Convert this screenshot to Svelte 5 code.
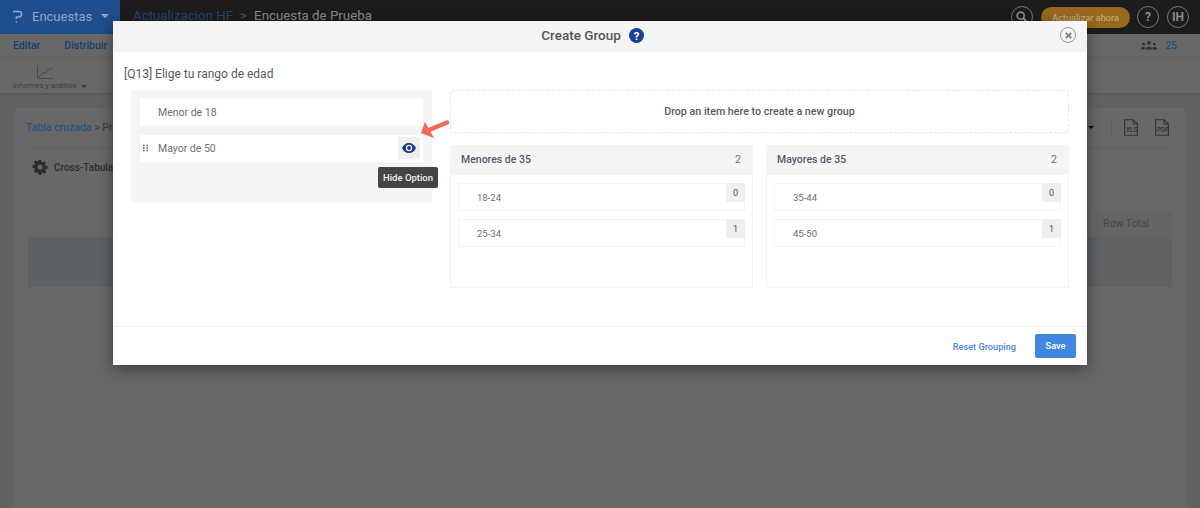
<script>
	const leftItems = [
		{ label: 'Menor de 18', active: false },
		{ label: 'Mayor de 50', active: true }
	];
	const groups = [
		{ name: 'Menores de 35', items: [{ label: '18-24', n: 0 }, { label: '25-34', n: 1 }] },
		{ name: 'Mayores de 35', items: [{ label: '35-44', n: 0 }, { label: '45-50', n: 1 }] }
	];
</script>

<div class="page">
	<header class="topbar">
		<div class="brand">
			<svg class="logo" viewBox="0 0 12 16" width="10" height="15">
				<path d="M0 2 H7 A3.200 3.200 0 0 1 7 8.500 H4 V11" fill="none" stroke="#8ea6c6" stroke-width="1.800"/>
				<circle cx="4" cy="14.500" r="1" fill="#8ea6c6"/>
			</svg>
			<span class="brand-name">Encuestas</span>
			<span class="caret"></span>
		</div>
		<div class="crumbs">
			<span class="crumb-link">Actualizacion HF</span>
			<span class="crumb-sep">&gt;</span>
			<span class="crumb-now">Encuesta de Prueba</span>
		</div>
		<div class="top-actions">
			<span class="round">
				<svg viewBox="0 0 16 16" width="14" height="14">
					<circle cx="6.500" cy="6.500" r="4" fill="none" stroke="#8c8c8c" stroke-width="2"/>
					<path d="M9.500 9.500 L14 14" stroke="#8c8c8c" stroke-width="2.400"/>
				</svg>
			</span>
			<span class="upgrade">Actualizar ahora</span>
			<span class="round">?</span>
			<span class="round">IH</span>
		</div>
	</header>

	<nav class="tabs">
		<span class="tab">Editar</span>
		<span class="tab">Distribuir</span>
		<span class="tabs-right">
			<svg viewBox="0 0 18 10" width="16" height="10">
				<g fill="#2e2e2e">
					<circle cx="9" cy="2.400" r="2"/><path d="M5.500 10 C5.500 6 12.500 6 12.500 10 Z"/>
					<circle cx="3" cy="4" r="1.500"/><path d="M0 10 C0 6.600 4 6.600 5 8 L4.600 10 Z"/>
					<circle cx="15" cy="4" r="1.500"/><path d="M18 10 C18 6.600 14 6.600 13 8 L13.400 10 Z"/>
				</g>
			</svg>
			<span class="seats">25</span>
		</span>
	</nav>

	<div class="toolbar">
		<div class="tool">
			<svg class="tool-icon" viewBox="0 0 16 14" width="16" height="14">
				<path d="M0.500 0.500 V13.500 H16" fill="none" stroke="#454545" stroke-width="0.800"/>
				<path d="M2 12 L6 7 L8 9 L11 4 L12.500 5.500 L15 2" fill="none" stroke="#454545" stroke-width="0.800"/>
			</svg>
			<span class="tool-label">Informes y análisis <span class="caret tool-caret"></span></span>
		</div>
	</div>

	<main class="content">
		<section class="card">
			<div class="card-head">
				<span class="bc"><span class="bc-link">Tabla cruzada</span> &gt; Pr</span>
				<span class="exports">
					<span class="caret dark-caret"></span>
					<span class="vsep"></span>
					<svg viewBox="0 0 22 24" width="16" height="17">
						<path d="M2 1 H14 L20 7 V23 H2 Z M14 1 V7 H20" fill="none" stroke="#333" stroke-width="1.600"/>
						<text x="4" y="18" class="file-text">XLS</text>
					</svg>
					<svg viewBox="0 0 22 24" width="16" height="17">
						<path d="M2 1 H14 L20 7 V23 H2 Z M14 1 V7 H20" fill="none" stroke="#333" stroke-width="1.600"/>
						<text x="4" y="18" class="file-text">PDF</text>
					</svg>
				</span>
			</div>
			<div class="settings">
				<svg viewBox="-1 -1 18 18" width="16" height="16">
					<path fill="#2d2d2d" fill-rule="evenodd" d="M6.500 0h3l.4 2.100 1.300.6L13 1.500l2 2-1.200 1.800.6 1.300 2.100.4v3l-2.100.4-.6 1.300 1.200 1.800-2 2-1.800-1.200-1.300.6-.4 2.100h-3l-.4-2.100-1.300-.6L3 14.500l-2-2 1.200-1.800-.6-1.300L-.5 9V6l2.100-.4.6-1.300L1 2.500l2-2 1.800 1.200 1.300-.6zM8 5.200a2.800 2.800 0 1 0 0 5.600 2.800 2.800 0 0 0 0-5.600z"/>
				</svg>
				<span>Cross-Tabulation</span>
			</div>
			<div class="table">
				<div class="thead"><span class="total-head">Row Total</span></div>
				<div class="trow"><span class="total-cell"></span></div>
				<div class="trow"><span class="total-cell"></span></div>
			</div>
		</section>
	</main>
</div>

<div class="modal">
	<div class="modal-head">
		<h2>Create Group</h2>
		<svg class="help" viewBox="0 0 16 16" width="15" height="15">
			<circle cx="8" cy="8" r="8" fill="#1c4190"/>
			<text x="8" y="12.400" text-anchor="middle" class="help-mark">?</text>
		</svg>
		<button class="close" aria-label="Close">
			<svg viewBox="0 0 10 10" width="9" height="9">
				<path d="M2 2 L8 8 M8 2 L2 8" stroke="#808080" stroke-width="2"/>
			</svg>
		</button>
	</div>

	<div class="question">[Q13] Elige tu rango de edad</div>

	<div class="board">
		<div class="pool">
			{#each leftItems as item}
				<div class="pool-item" class:active={item.active}>
					{#if item.active}
						<svg class="grip" viewBox="0 0 6 8" width="5" height="8">
							<g fill="#777">
								<rect x="0" y="0" width="2" height="2"/><rect x="4" y="0" width="2" height="2"/>
								<rect x="0" y="3" width="2" height="2"/><rect x="4" y="3" width="2" height="2"/>
								<rect x="0" y="6" width="2" height="2"/><rect x="4" y="6" width="2" height="2"/>
							</g>
						</svg>
					{/if}
					<span>{item.label}</span>
					{#if item.active}
						<span class="eye-btn">
							<svg viewBox="0 0 14 10" width="14" height="10">
								<path fill="#1c3a8c" fill-rule="evenodd" d="M7 0C3.800 0 1.200 2 0 5c1.200 3 3.800 5 7 5s5.800-2 7-5c-1.200-3-3.800-5-7-5zm0 8.200A3.200 3.200 0 1 1 7 1.800a3.200 3.200 0 0 1 0 6.400z"/>
								<circle cx="7" cy="5" r="1.900" fill="#1c3a8c"/>
							</svg>
						</span>
						<span class="tooltip">Hide Option</span>
					{/if}
				</div>
			{/each}
		</div>

		<div class="groups">
			<div class="dropzone">Drop an item here to create a new group</div>
			<div class="group-row">
				{#each groups as group}
					<div class="group">
						<div class="group-head">
							<span>{group.name}</span>
							<span class="count">{group.items.length}</span>
						</div>
						<div class="group-body">
							{#each group.items as item}
								<div class="group-item">
									<span>{item.label}</span>
									<span class="badge">{item.n}</span>
								</div>
							{/each}
						</div>
					</div>
				{/each}
			</div>
		</div>
	</div>

	<div class="modal-foot">
		<span class="reset">Reset Grouping</span>
		<button class="save">Save</button>
	</div>

	<svg class="pointer" viewBox="0 0 30 22" width="30" height="22">
		<path d="M8 13 L26 5.500" stroke="#ee6a56" stroke-width="4.500" stroke-linecap="round" fill="none"/>
		<path d="M0 16 L4 5 L13 21 Z" fill="#ee6a56"/>
	</svg>
</div>

<style>
	:global(body) {
		margin: 0;
		background: #676767;
		font-family: Roboto, "Noto Sans", sans-serif;
	}

	.page {
		height: 508px;
		overflow: hidden;
		background: #686868;
		color: #2e2e2e;
		font-size: 12px;
	}

	.topbar {
		height: 34px;
		display: flex;
		align-items: center;
		background: #1c1c1c;
	}

	.brand {
		width: 120px;
		height: 34px;
		display: flex;
		align-items: center;
		gap: 9px;
		padding: 0 0 2px 13px;
		box-sizing: border-box;
		background: #1e4e8e;
	}

	.logo {
		flex: none;
	}

	.brand-name {
		font-size: 13px;
		color: #8ea6c6;
	}

	.caret {
		display: inline-block;
		width: 0;
		height: 0;
		border-left: 4px solid transparent;
		border-right: 4px solid transparent;
		border-top: 4px solid #8ea6c6;
	}

	.crumbs {
		margin: 0 0 3px 13px;
		display: flex;
		gap: 7px;
		font-size: 13.300px;
		color: #23456f;
	}

	.crumb-sep {
		color: #555;
	}

	.crumb-now {
		color: #8a8a8a;
	}

	.top-actions {
		margin-left: auto;
		margin-right: 11px;
		display: flex;
		align-items: center;
		gap: 8px;
	}

	.round {
		width: 20px;
		height: 20px;
		border: 1px solid #777;
		border-radius: 50%;
		display: flex;
		align-items: center;
		justify-content: center;
		color: #8c8c8c;
		font-size: 12px;
		font-weight: 700;
	}

	.upgrade {
		width: 89px;
		height: 21px;
		margin-right: -1px;
		border-radius: 11px;
		background: #97691f;
		color: #c4a679;
		font-size: 9.200px;
		font-weight: 500;
		line-height: 21px;
		text-align: center;
	}

	.tabs {
		height: 22px;
		padding: 0 23px 1px 13px;
		display: flex;
		align-items: center;
		gap: 24px;
		border-bottom: 1px solid #616161;
	}

	.tab {
		font-size: 10.500px;
		font-weight: 500;
		color: #1c3f6e;
	}

	.tabs-right {
		margin-left: auto;
		display: flex;
		align-items: center;
		gap: 9px;
	}

	.seats {
		color: #1e4e8e;
		font-size: 10px;
		font-weight: 500;
	}

	.toolbar {
		height: 35px;
		display: flex;
		padding-left: 13px;
		border-bottom: 2px solid #5a5a5a;
	}

	.tool {
		display: flex;
		flex-direction: column;
		align-items: flex-start;
		gap: 2px;
		padding-top: 7px;
	}

	.tool-icon {
		margin-left: 24px;
	}

	.tool-label {
		font-size: 7.600px;
		color: #3f3f3f;
	}

	.tool-caret {
		margin-left: 2px;
		vertical-align: middle;
		border-top-color: #3a3a3a;
		border-width: 3px 3px 0;
	}

	.content {
		padding: 13px 15px 0;
		background: #636363;
		height: 400px;
	}

	.card {
		height: 400px;
		background: #686868;
		padding: 0 13px;
	}

	.card-head {
		height: 39px;
		display: flex;
		align-items: center;
		border-bottom: 1px solid #626262;
	}

	.bc {
		margin-left: -2px;
		font-size: 10.500px;
		color: #3a3a3a;
	}

	.bc-link {
		color: #1e4e8e;
	}

	.exports {
		margin-left: auto;
		display: flex;
		align-items: center;
		gap: 15px;
		padding-right: 2px;
	}

	.dark-caret {
		margin-right: 2px;
		border-top-color: #111;
		border-width: 3px 3px 0;
	}

	.vsep {
		width: 1px;
		height: 22px;
		margin-right: -4px;
		background: #616161;
	}

	.file-text {
		font-size: 9px;
		font-weight: 500;
		fill: #333;
	}

	.settings {
		display: flex;
		align-items: center;
		gap: 6px;
		padding: 11px 0 0 4px;
		font-size: 10px;
		font-weight: 500;
		color: #2e2e2e;
	}

	.table {
		margin-top: 37px;
	}

	.thead {
		height: 25px;
		display: flex;
		justify-content: flex-end;
		color: #454545;
		font-size: 10.500px;
	}

	.total-head {
		width: 77px;
		padding-left: 8px;
		box-sizing: border-box;
		line-height: 23px;
		background: #636465;
	}

	.trow {
		height: 25px;
		display: flex;
		justify-content: flex-end;
		align-items: flex-start;
		background: #5e6265;
	}

	.total-cell {
		width: 77px;
		height: 24px;
		background: #606264;
	}

	.modal {
		position: absolute;
		left: 113px;
		top: 21px;
		width: 974px;
		height: 344px;
		display: flex;
		flex-direction: column;
		background: #fff;
		box-shadow: 0 4px 14px rgba(0, 0, 0, 0.45);
		color: #5e6570;
		font-size: 10px;
	}

	.modal-head {
		position: relative;
		height: 31px;
		padding: 0 15px 3px 0;
		box-sizing: border-box;
		display: flex;
		align-items: center;
		justify-content: center;
		gap: 8px;
		background: #f3f4f4;
	}

	h2 {
		margin: 0;
		font-size: 13.500px;
		font-weight: 500;
		color: #555;
	}

	.help {
		display: block;
	}

	.help-mark {
		font-size: 12px;
		font-weight: 700;
		fill: #fff;
	}

	.close {
		position: absolute;
		right: 11px;
		top: 6px;
		width: 16px;
		height: 16px;
		padding: 0;
		display: flex;
		align-items: center;
		justify-content: center;
		border: 1px solid #999;
		border-radius: 50%;
		background: transparent;
	}

	.question {
		padding: 14px 11px 8px;
		font-size: 12px;
		line-height: 16px;
		color: #555b66;
	}

	.board {
		display: flex;
		gap: 18px;
		padding: 0 18px;
		flex: 1;
		align-items: flex-start;
	}

	.pool {
		width: 301px;
		height: 112px;
		flex: none;
		box-sizing: border-box;
		padding: 8px 9px;
		display: flex;
		flex-direction: column;
		gap: 9px;
		background: #f4f6f6;
	}

	.pool-item {
		position: relative;
		height: 28px;
		display: flex;
		align-items: center;
		padding-left: 18px;
		background: #fff;
		font-size: 10.500px;
		color: #6a707a;
	}

	.pool-item.active {
		height: 27px;
	}

	.grip {
		position: absolute;
		left: 3px;
		top: 9px;
	}

	.eye-btn {
		position: absolute;
		right: 3px;
		top: 2px;
		width: 22px;
		height: 22px;
		display: flex;
		align-items: center;
		justify-content: center;
		background: #efefef;
	}

	.tooltip {
		position: absolute;
		right: -15px;
		top: 32px;
		width: 60px;
		height: 21px;
		border-radius: 2px;
		background: #444;
		color: #f0f0f0;
		font-size: 9.500px;
		font-weight: 500;
		line-height: 21px;
		text-align: center;
	}

	.groups {
		flex: 1;
		display: flex;
		flex-direction: column;
		gap: 12px;
	}

	.dropzone {
		height: 43px;
		box-sizing: border-box;
		display: flex;
		align-items: center;
		justify-content: center;
		border: 1px dashed #e8e8e8;
		border-radius: 2px;
		font-size: 10.700px;
		font-weight: 500;
		color: #565c66;
	}

	.group-row {
		display: flex;
		gap: 13px;
	}

	.group {
		flex: 1;
		height: 143px;
		box-sizing: border-box;
		border: 1px solid #f2f3f3;
	}

	.group-head {
		height: 30px;
		display: flex;
		align-items: center;
		justify-content: space-between;
		padding: 0 12px 2px 11px;
		margin: -1px -1px 0;
		box-sizing: border-box;
		background: #f4f6f6;
		font-size: 10.500px;
		font-weight: 500;
		color: #555b66;
	}

	.count {
		font-weight: 400;
		color: #6a707a;
	}

	.group-body {
		padding: 8px 7px;
		display: flex;
		flex-direction: column;
		gap: 8px;
	}

	.group-item {
		position: relative;
		height: 28px;
		box-sizing: border-box;
		display: flex;
		align-items: center;
		padding-left: 18px;
		border: 1px solid #f3f4f4;
		font-size: 9.500px;
		color: #6a707a;
	}

	.badge {
		position: absolute;
		right: -1px;
		top: -1px;
		width: 19px;
		height: 19px;
		display: flex;
		align-items: center;
		justify-content: center;
		background: #efefef;
		font-size: 9px;
		color: #555;
	}

	.modal-foot {
		height: 38px;
		display: flex;
		align-items: center;
		justify-content: flex-end;
		gap: 19px;
		padding: 0 11px;
		border-top: 1px solid #eeeeee;
	}

	.reset {
		font-size: 9.200px;
		font-weight: 500;
		color: #4a88dc;
	}

	.save {
		width: 41px;
		height: 24px;
		padding: 0 0 1px;
		border: none;
		border-radius: 2px;
		background: #4186e0;
		color: #fff;
		font-family: inherit;
		font-size: 9.200px;
		font-weight: 500;
	}

	.pointer {
		position: absolute;
		left: 308px;
		top: 96px;
	}
</style>
